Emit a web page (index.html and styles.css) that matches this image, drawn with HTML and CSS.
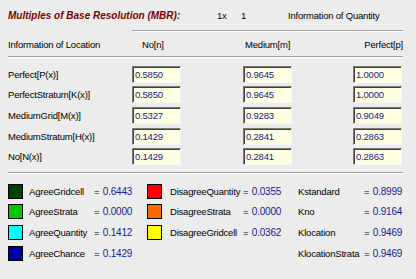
FILE: index.html
```html
<!DOCTYPE html>
<html>
<head>
<meta charset="utf-8">
<link rel="stylesheet" href="styles.css">
</head>
<body>
<div class="panel">
  <div class="top">
    <div class="title">Multiples of Base Resolution (MBR):</div>
    <div class="mult">1x</div>
    <div class="mult-val">1</div>
    <div class="qty">Information of Quantity</div>
  </div>
  <div class="hdr-line"></div>
  <div class="hdr">
    <div class="h-loc">Information of Location</div>
    <div class="h-no">No[n]</div>
    <div class="h-med">Medium[m]</div>
    <div class="h-perf">Perfect[p]</div>
  </div>
  <div class="rows">
    <div class="lbl">Perfect[P(x)]</div>
    <div class="cell"><span class="box">0.5850</span></div>
    <div class="cell"><span class="box">0.9645</span></div>
    <div class="cell"><span class="box">1.0000</span></div>

    <div class="lbl">PerfectStratum[K(x)]</div>
    <div class="cell"><span class="box">0.5850</span></div>
    <div class="cell"><span class="box">0.9645</span></div>
    <div class="cell"><span class="box">1.0000</span></div>

    <div class="lbl">MediumGrid[M(x)]</div>
    <div class="cell"><span class="box">0.5327</span></div>
    <div class="cell"><span class="box">0.9283</span></div>
    <div class="cell"><span class="box">0.9049</span></div>

    <div class="lbl">MediumStratum[H(x)]</div>
    <div class="cell"><span class="box">0.1429</span></div>
    <div class="cell"><span class="box">0.2841</span></div>
    <div class="cell"><span class="box">0.2863</span></div>

    <div class="lbl">No[N(x)]</div>
    <div class="cell"><span class="box">0.1429</span></div>
    <div class="cell"><span class="box">0.2841</span></div>
    <div class="cell"><span class="box">0.2863</span></div>
  </div>
  <div class="sep"></div>
  <div class="legend">
    <span class="sw c-agc"></span><span class="lg">AgreeGridcell</span><span class="eq">= <b>0.6443</b></span>
    <span class="sw c-dq"></span><span class="lg">DisagreeQuantity</span><span class="eq">= <b>0.0355</b></span>
    <span class="lg">Kstandard</span><span class="eq">= <b>0.8999</b></span>

    <span class="sw c-as"></span><span class="lg">AgreeStrata</span><span class="eq">= <b>0.0000</b></span>
    <span class="sw c-ds"></span><span class="lg">DisagreeStrata</span><span class="eq">= <b>0.0000</b></span>
    <span class="lg">Kno</span><span class="eq">= <b>0.9164</b></span>

    <span class="sw c-aq"></span><span class="lg">AgreeQuantity</span><span class="eq">= <b>0.1412</b></span>
    <span class="sw c-dg"></span><span class="lg">DisagreeGridcell</span><span class="eq">= <b>0.0362</b></span>
    <span class="lg">Klocation</span><span class="eq">= <b>0.9469</b></span>

    <span class="sw c-ac"></span><span class="lg">AgreeChance</span><span class="eq">= <b>0.1429</b></span>
    <span></span><span></span><span></span>
    <span class="lg">KlocationStrata</span><span class="eq">= <b>0.9469</b></span>
  </div>
</div>
</body>
</html>
```

FILE: styles.css
```css
html, body {
  margin: 0;
  padding: 0;
  background: #ececec;
}
body {
  width: 416px;
  height: 279px;
  overflow: hidden;
  font-family: "Liberation Sans", Arial, sans-serif;
  font-size: 9.5px;
  letter-spacing: -0.2px;
  color: #000;
}
.panel {
  padding: 0 0 0 8px;
  width: 395px;
}
.top {
  display: grid;
  grid-template-columns: 209px 24px 47px auto;
  align-items: center;
  height: 30px;
}
.title {
  color: #7d0000;
  font-weight: bold;
  font-style: italic;
  font-size: 10px;
  letter-spacing: 0;
}
.hdr-line {
  margin-left: 124px;
  height: 0;
  border-top: 1px solid #a0a0a0;
  border-bottom: 1px solid #fafafa;
}
.hdr {
  display: grid;
  grid-template-columns: 124px 111px 110px 50px;
  align-items: center;
  height: 24px;
  border-bottom: 1px solid #a0a0a0;
  box-shadow: 0 1px 0 #fafafa;
}
.h-no { padding-left: 10px; }
.h-med { padding-left: 2px; }
.h-perf { text-align: right; white-space: nowrap; }
.rows {
  display: grid;
  grid-template-columns: 124px 111px 110px 50px;
  grid-auto-rows: 20.6px;
  align-items: center;
  padding: 7px 0 5px;
}
.box {
  display: block;
  box-sizing: border-box;
  width: 49px;
  height: 17px;
  line-height: 15px;
  padding-left: 2px;
  background: #ffffe1;
  color: #1a1a8e;
  border: 1px solid;
  border-color: #7a7a7a #f8f8f8 #f8f8f8 #7a7a7a;
  box-shadow: inset 1px 1px 0 #404040;
}
.sep {
  height: 0;
  border-top: 1px solid #a0a0a0;
  border-bottom: 1px solid #fafafa;
}
.legend {
  display: grid;
  grid-template-columns: 21px 65px 53px 23px 73px 55px 66px auto;
  grid-auto-rows: 20.6px;
  align-items: center;
  padding-top: 7px;
}
.sw {
  display: block;
  box-sizing: border-box;
  width: 15px;
  height: 15px;
  border: 1px solid #000;
}
.eq b {
  font-weight: normal;
  color: #1a1a8e;
  font-size: 10px;
  margin-left: 1px;
}
.c-agc { background: #004000; }
.c-as { background: #00c800; }
.c-aq { background: #00ffff; }
.c-ac { background: #0000a8; }
.c-dq { background: #ff0000; }
.c-ds { background: #ff6a00; }
.c-dg { background: #ffff00; }
```
